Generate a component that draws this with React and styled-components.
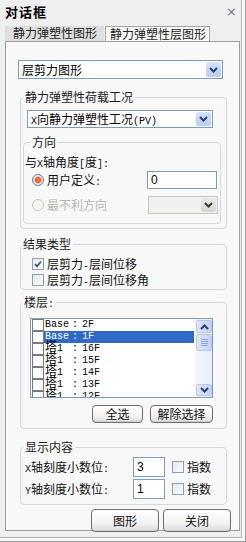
import React from "react";
import styled, { createGlobalStyle, css } from "styled-components";

const Global = createGlobalStyle`
  html, body { margin: 0; padding: 0; }
  body {
    width: 246px; height: 542px; overflow: hidden;
    font-family: "Noto Sans CJK SC", "Liberation Sans", sans-serif;
    font-size: 12px; color: #000; background: #f0f0f0;
  }
  * { box-sizing: border-box; }
`;

const Window = styled.div`
  width: 246px; height: 542px;
  background: #efefef;
  display: flex; flex-direction: column;
  border-right: 1px solid #9c9c9c;
  border-bottom: 1px solid #9c9c9c;
  box-shadow: inset -3px -3px 0 #f7f7f7, inset -4px -4px 0 #b4b4b4;
`;

const TitleBar = styled.div`
  height: 24px; display: flex; align-items: center; justify-content: space-between;
  padding: 0 8px 0 5px;
`;
const Title = styled.span`
  font-size: 13px; font-weight: 700; line-height: 14px; letter-spacing: 1px;
`;
const Close = styled.span`
  font-family: "DejaVu Sans", sans-serif; font-size: 13px; color: #777; line-height: 14px;
`;

const TabStrip = styled.div`
  height: 17px; display: flex; align-items: flex-end; padding-left: 5px;
`;
const Tab = styled.div`
  height: 15px; line-height: 14px; font-size: 12px;
  padding: ${p => (p.$active ? "0 3px 0 4px" : "0 7px 0 8px")};
  background: ${p => (p.$active ? "#fafafa" : "#dedede")};
  border: ${p => (p.$active ? "1px solid #a5a5a5" : "none")};
  border-bottom: none;
  margin-left: ${p => (p.$active ? "1px" : "0")};
  color: #222;
`;

const Panel = styled.div`
  margin-left: 5px; width: 235px; height: 490px;
  border: 1px solid #9d9d9d;
  background: #f8f8f8;
  padding: 18px 0 0 12px;
  display: flex; flex-direction: column; align-items: flex-start;
`;

const Combo = styled.div`
  display: flex; align-items: stretch; flex: none;
  width: ${p => p.$w}px; height: ${p => p.$h}px;
  margin-left: ${p => p.$ml || 0}px; margin-top: ${p => p.$mt || 0}px;
  border: 1px solid ${p => (p.$disabled ? "#c9c7ba" : "#7f9db9")};
  background: ${p => (p.$disabled ? "#f0f0ee" : "#fff")};
`;
const ComboText = styled.span`
  flex: 1; padding-left: 3px; line-height: ${p => p.$lh}px; white-space: nowrap; overflow: hidden;
`;
const ComboBtn = styled.span`
  width: 15px; margin: 1px; display: flex; align-items: center; justify-content: center;
  border-radius: 2px;
  background: ${p =>
    p.$disabled
      ? "linear-gradient(#e9e9e9, #d6d6d6)"
      : "linear-gradient(#d3e1fb, #b7cdf6)"};
`;

const Lat = styled.span`
  font-family: "Liberation Mono", monospace; font-size: 10px; line-height: 0;
`;

const Group = styled.fieldset`
  margin: ${p => p.$mt || 0}px 0 0 ${p => p.$ml || 0}px;
  width: ${p => p.$w}px;
  padding: ${p => p.$pt || 0}px 0 ${p => p.$pb || 0}px 0;
  border: 1px solid #d3d8dc;
  border-radius: 4px;
  min-width: 0;
  display: flex; flex-direction: column; align-items: flex-start;
`;
const Legend = styled.legend`
  padding: 0 2px; margin-left: ${p => p.$ml ?? 2}px;
  font-size: 12px; line-height: 12px; height: 12px; color: #1a1a1a; white-space: nowrap;
`;

const Label = styled.div`
  line-height: 14px; height: 14px; flex: none;
  margin-left: ${p => p.$ml || 0}px;
  width: ${p => (p.$w ? `${p.$w}px` : "auto")};
  white-space: nowrap;
  color: ${p => (p.$disabled ? "#b3b3ad" : "#111")};
  ${p => p.$disabled && css`text-shadow: 1px 1px 0 #fff;`}
`;

const Row = styled.div`
  display: flex; align-items: center;
  height: ${p => p.$h}px; margin-top: ${p => p.$mt || 0}px; margin-left: ${p => p.$ml || 0}px;
`;

const Radio = styled.span`
  width: 12px; height: 12px; border-radius: 50%; flex: none;
  border: 1px solid ${p => (p.$disabled ? "#cac8bb" : "#5b7a98")};
  background: ${p => (p.$disabled ? "#f6f6f4" : "radial-gradient(circle at 50% 50%, #ff8a4a 0, #e8571e 2.6px, #f7c1a0 3.4px, #eef1f4 4.2px, #dfe4ea 6px)")};
  margin-right: 3px;
`;

const Input = styled.div`
  width: ${p => p.$w}px; height: ${p => p.$h}px; flex: none;
  border: 1px solid #7f9db9; background: #fff;
  padding-left: 3px; line-height: ${p => p.$h - 2}px;
  font-family: "Liberation Sans", sans-serif; font-size: 12px;
`;

const Check = styled.span`
  width: 12px; height: 12px; flex: none;
  border: 1px solid #8e9fb3;
  background: linear-gradient(135deg, #e4e8ef, #fbfbfc);
  display: flex; align-items: center; justify-content: center;
  margin-left: ${p => p.$ml || 0}px;
  margin-right: ${p => p.$mr ?? 3}px;
`;

const ListBox = styled.div`
  margin: 5px 0 0 9px; width: 183px; height: 80px;
  border: 1px solid #7f9db9; background: #fff;
  display: flex; overflow: hidden;
`;
const Items = styled.div`
  flex: 1; display: flex; flex-direction: column;
`;
const Item = styled.div`
  height: 12px; display: flex; align-items: center; flex: none;
  margin: 0 1px;
  background: ${p => (p.$sel ? "#316ac5" : "transparent")};
  color: ${p => (p.$sel ? "#fff" : "#000")};
  font-family: "Liberation Mono", monospace; font-size: 10px; line-height: 12px;
  white-space: pre;
`;
const ItemBox = styled.span`
  width: 12px; height: 12px; border: 1px solid #7a7a7a; background: #fff; flex: none;
  margin-right: 1px;
`;
const Cell = styled.span`
  width: ${p => p.$w}px; flex: none; height: 12px; line-height: 12px; overflow: visible;
`;
const Cjk = styled.span`
  font-family: "Noto Sans CJK SC", sans-serif; font-size: 12px; line-height: 0;
`;

const ScrollBar = styled.div`
  width: 17px; display: flex; flex-direction: column;
  background: linear-gradient(90deg, #f3f6fd, #e8eefb);
`;
const SBtn = styled.div`
  height: ${p => p.$h}px; margin: 1px 0 1px 1px; flex: none;
  border: 1px solid #b9c9ea; border-radius: 2px;
  background: linear-gradient(90deg, #dce6fc, #c3d4f8);
  display: flex; align-items: center; justify-content: center;
`;
const Thumb = styled(SBtn)`
  margin-top: 0;
`;
const Track = styled.div`flex: 1;`;

const BtnRow = styled.div`
  display: flex; justify-content: flex-end; gap: ${p => p.$gap}px;
  width: ${p => p.$w}px; margin-top: ${p => p.$mt}px;
`;
const Button = styled.div`
  width: ${p => p.$w}px; height: ${p => p.$h}px;
  border: 1px solid #6f6f6f; border-radius: 4px;
  background: linear-gradient(#ffffff, #f3f3f3 60%, #dcdcdc);
  box-shadow: inset 0 -1px 0 #cfcfcf;
  display: flex; align-items: center; justify-content: center;
  font-size: 12px; line-height: 12px; color: #111;
`;

const Chevron = ({ color = "#2b3f66" }) => (
  <svg width="9" height="6" viewBox="0 0 9 6">
    <path d="M1 1 L4.5 4.5 L8 1" fill="none" stroke={color} strokeWidth="2" />
  </svg>
);
const ChevronUp = ({ color = "#2b3f66" }) => (
  <svg width="9" height="6" viewBox="0 0 9 6">
    <path d="M1 5 L4.5 1.5 L8 5" fill="none" stroke={color} strokeWidth="2" />
  </svg>
);
const Grip = () => (
  <svg width="7" height="7" viewBox="0 0 7 7">
    {[0.5, 2.5, 4.5, 6.5].map(y => (
      <line key={y} x1="0" x2="7" y1={y} y2={y} stroke="#8fa6d6" strokeWidth="1" />
    ))}
  </svg>
);
const Tick = () => (
  <svg width="8" height="8" viewBox="0 0 8 8">
    <path d="M1 4 L3 6.3 L7 1.5" fill="none" stroke="#4a5d78" strokeWidth="1.8" />
  </svg>
);

const floors = [
  { a: "Base", f: "2F" },
  { a: "Base", f: "1F", sel: true },
  { a: "塔1", f: "16F" },
  { a: "塔1", f: "15F" },
  { a: "塔1", f: "14F" },
  { a: "塔1", f: "13F" },
  { a: "塔1", f: "12F" },
];

export default function App() {
  return (
    <>
      <Global />
      <Window>
        <TitleBar>
          <Title>对话框</Title>
          <Close>×</Close>
        </TitleBar>
        <TabStrip>
          <Tab>静力弹塑性图形</Tab>
          <Tab $active>静力弹塑性层图形</Tab>
        </TabStrip>
        <Panel>
          <Combo $w={205} $h={19}>
            <ComboText $lh={17}>层剪力图形</ComboText>
            <ComboBtn><Chevron /></ComboBtn>
          </Combo>

          <Group $mt={12} $ml={2} $w={207} $pt={7} $pb={4}>
            <Legend $ml={2}>静力弹塑性荷载工况</Legend>
            <Combo $w={186} $h={18} $ml={6}>
              <ComboText $lh={16}><Lat>X</Lat>向静力弹塑性工况<Lat>(PV)</Lat></ComboText>
              <ComboBtn><Chevron /></ComboBtn>
            </Combo>
            <Group $mt={8} $ml={2} $w={198} $pt={7} $pb={9}>
              <Legend $ml={6}>方向</Legend>
              <Label $ml={1}>与<Lat>X</Lat>轴角度<Lat>[</Lat>度<Lat>]:</Lat></Label>
              <Row $h={18} $mt={2} $ml={8}>
                <Radio />
                <Label $w={100}>用户定义<Lat>:</Lat></Label>
                <Input $w={70} $h={18}>0</Input>
              </Row>
              <Row $h={18} $mt={7} $ml={8}>
                <Radio $disabled />
                <Label $w={101} $disabled>最不利方向</Label>
                <Combo $w={70} $h={18} $disabled>
                  <ComboText $lh={16} />
                  <ComboBtn $disabled><Chevron color="#3a3a3a" /></ComboBtn>
                </Combo>
              </Row>
            </Group>
          </Group>

          <Group $mt={9} $ml={2} $w={207} $pt={6} $pb={1}>
            <Legend $ml={0}>结果类型</Legend>
            <Row $h={16} $ml={11}>
              <Check><Tick /></Check>
              <Label>层剪力<Lat>-</Lat>层间位移</Label>
            </Row>
            <Row $h={16} $ml={11}>
              <Check />
              <Label>层剪力<Lat>-</Lat>层间位移角</Label>
            </Row>
          </Group>

          <Group $mt={6} $ml={2} $w={207} $pt={5} $pb={5}>
            <Legend $ml={1}>楼层<Lat>:</Lat></Legend>
            <ListBox>
              <Items>
                {floors.map((fl, i) => (
                  <Item key={i} $sel={fl.sel}>
                    <ItemBox />
                    <Cell $w={27}>
                      {fl.a === "Base" ? "Base" : (<><Cjk>塔</Cjk>1</>)}
                    </Cell>
                    <Cell $w={10}>:</Cell>
                    <Cell $w={40}>{fl.f}</Cell>
                  </Item>
                ))}
              </Items>
              <ScrollBar>
                <SBtn $h={13}><ChevronUp /></SBtn>
                <Thumb $h={17}><Grip /></Thumb>
                <Track />
                <SBtn $h={12}><Chevron /></SBtn>
              </ScrollBar>
            </ListBox>
            <BtnRow $w={192} $mt={7} $gap={7}>
              <Button $w={51} $h={18}>全选</Button>
              <Button $w={63} $h={18}>解除选择</Button>
            </BtnRow>
          </Group>

          <Group $mt={12} $ml={2} $w={207} $pt={4} $pb={5}>
            <Legend $ml={2}>显示内容</Legend>
            <Row $h={20} $ml={4}>
              <Label $w={108}><Lat>X</Lat>轴刻度小数位<Lat>:</Lat></Label>
              <Input $w={32} $h={20}>3</Input>
              <Check $ml={7} $mr={3} />
              <Label>指数</Label>
            </Row>
            <Row $h={20} $mt={2} $ml={4}>
              <Label $w={108}><Lat>Y</Lat>轴刻度小数位<Lat>:</Lat></Label>
              <Input $w={32} $h={20}>1</Input>
              <Check $ml={7} $mr={3} />
              <Label>指数</Label>
            </Row>
          </Group>

          <BtnRow $w={213} $mt={4} $gap={4}>
            <Button $w={68} $h={23}>图形</Button>
            <Button $w={68} $h={23}>关闭</Button>
          </BtnRow>
        </Panel>
      </Window>
    </>
  );
}
